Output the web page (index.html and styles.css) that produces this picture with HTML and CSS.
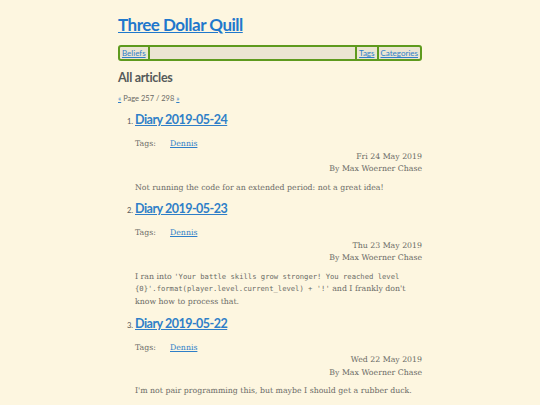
FILE: index.html
```html
<!DOCTYPE html>
<html lang="en">
<head>
<meta charset="utf-8">
<title>All articles — Three Dollar Quill</title>
<link rel="stylesheet" href="styles.css">
</head>
<body>
<div class="page">
  <header class="site-header">
    <h1 class="site-title"><a href="#">Three Dollar Quill</a></h1>
    <nav class="nav">
      <a href="#" class="nav-item">Beliefs</a>
      <span class="nav-fill"></span>
      <a href="#" class="nav-item">Tags</a>
      <a href="#" class="nav-item nav-last">Categories</a>
    </nav>
  </header>
  <main>
    <h2 class="section-title">All articles</h2>
    <p class="pager"><a href="#">«</a> Page 257 / 298 <a href="#">»</a></p>
    <ol class="articles">
      <li class="article">
        <h3 class="article-title"><a href="#">Diary 2019-05-24</a></h3>
        <div class="tags"><span class="tags-label">Tags:</span><a href="#">Dennis</a></div>
        <div class="meta">
          <div>Fri 24 May 2019</div>
          <div>By Max Woerner Chase</div>
        </div>
        <p class="summary">Not running the code for an extended period: not a great idea!</p>
      </li>
      <li class="article">
        <h3 class="article-title"><a href="#">Diary 2019-05-23</a></h3>
        <div class="tags"><span class="tags-label">Tags:</span><a href="#">Dennis</a></div>
        <div class="meta">
          <div>Thu 23 May 2019</div>
          <div>By Max Woerner Chase</div>
        </div>
        <p class="summary">I ran into <code>'Your battle skills grow stronger! You reached level {0}'.format(player.level.current_level) + '!'</code> and I frankly don't know how to process that.</p>
      </li>
      <li class="article">
        <h3 class="article-title"><a href="#">Diary 2019-05-22</a></h3>
        <div class="tags"><span class="tags-label">Tags:</span><a href="#">Dennis</a></div>
        <div class="meta">
          <div>Wed 22 May 2019</div>
          <div>By Max Woerner Chase</div>
        </div>
        <p class="summary">I'm not pair programming this, but maybe I should get a rubber duck.</p>
      </li>
    </ol>
  </main>
</div>
</body>
</html>
```
FILE: styles.css
```css
html, body {
  margin: 0;
  padding: 0;
  background: #fdf6e0;
}
body {
  font-family: "DejaVu Serif", serif;
  color: #6b6b66;
  font-size: 7.8px;
  line-height: 12.5px;
}
a { color: #2f7fc8; }
.page {
  width: 304px;
  margin: 0 auto;
  padding-top: 13px;
}
.site-title {
  margin: 0;
  font-family: Lato, sans-serif;
  font-size: 17px;
  line-height: 24px;
  font-weight: 700;
  letter-spacing: -0.5px;
}
.site-title a { color: #1f78cc; }
.nav {
  display: flex;
  margin-top: 8px;
  border: 2px solid #5e9a1e;
  border-radius: 3px;
  background: #ebe5d2;
  font-family: Lato, sans-serif;
  font-size: 8px;
  line-height: 12px;
}
.nav-item {
  padding: 0 2px;
  border-right: 2px solid #5e9a1e;
  color: #2f7fc8;
}
.nav-fill {
  flex: 1;
  border-right: 2px solid #5e9a1e;
}
.nav-last { border-right: none; }
.section-title {
  margin: 8px 0 0;
  font-family: Lato, sans-serif;
  font-size: 12.5px;
  line-height: 18px;
  font-weight: 700;
  letter-spacing: -0.3px;
  color: #555a5a;
}
.pager {
  margin: 6px 0 0;
  font-family: Lato, sans-serif;
  font-size: 7.5px;
  line-height: 12px;
}
.articles {
  margin: 5px 0 0;
  padding-left: 17px;
}
.article::marker {
  font-family: Lato, sans-serif;
  font-size: 7.5px;
  color: #555;
}
.article-title {
  margin: 0;
  font-family: Lato, sans-serif;
  font-size: 12.5px;
  line-height: 20px;
  font-weight: 700;
  letter-spacing: -0.5px;
}
.tags {
  margin-top: 7px;
  display: flex;
  line-height: 13.5px;
}
.tags-label { width: 35px; }
.meta { text-align: right; }
.summary {
  margin: 6px 0 5px;
  line-height: 12.7px;
}
code {
  font-family: "DejaVu Sans Mono", monospace;
  font-size: 7.2px;
}
```
